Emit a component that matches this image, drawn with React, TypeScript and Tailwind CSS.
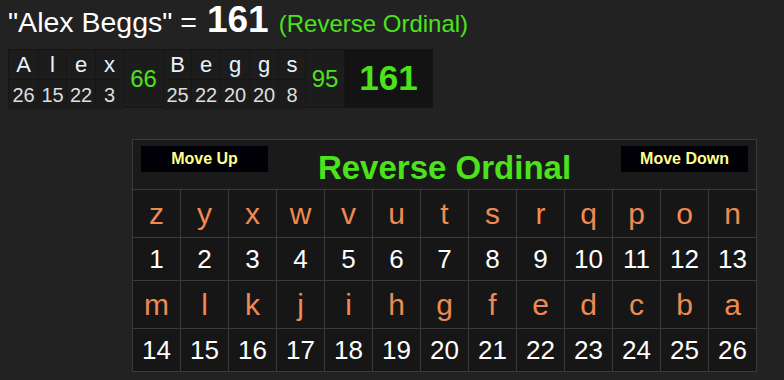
const GREEN = "text-[#4ce21c]";

const breakdown = [
  { ch: "A", n: 26, w: "w-[29px]" },
  { ch: "l", n: 15, w: "w-[27px]" },
  { ch: "e", n: 22, w: "w-[28px]" },
  { ch: "x", n: 3, w: "w-[27px]" },
  { sum: 66, w: "w-[39px]" },
  { ch: "B", n: 25, w: "w-[27px]" },
  { ch: "e", n: 22, w: "w-[28px]" },
  { ch: "g", n: 20, w: "w-[28px]" },
  { ch: "g", n: 20, w: "w-[28px]" },
  { ch: "s", n: 8, w: "w-[26px]" },
  { sum: 95, w: "w-[38px]" },
];

const rows = [
  { letters: "zyxwvutsrqpon".split(""), start: 1 },
  { letters: "mlkjihgfedcba".split(""), start: 14 },
];

const Breakdown = () => (
  <div className="ml-2 flex h-[59px] w-[425px] gap-px bg-[#161616] p-px">
    {breakdown.map((cell, i) =>
      cell.sum !== undefined ? (
        <div
          key={i}
          className={`${cell.w} flex items-center justify-center bg-[#1c1c1c] pt-px text-[24px] ${GREEN}`}
        >
          {cell.sum}
        </div>
      ) : (
        <div key={i} className={`${cell.w} flex flex-col gap-px`}>
          <div className="flex h-[29px] items-center justify-center bg-[#1c1c1c] text-[22px] text-[#e8f3ff]">
            {cell.ch}
          </div>
          <div className="flex flex-1 items-center justify-center bg-[#1c1c1c] text-[20px] text-[#dedede]">
            {cell.n}
          </div>
        </div>
      )
    )}
    <div className={`flex flex-1 items-center justify-center bg-[#131313] text-[35px] font-bold ${GREEN}`}>
      161
    </div>
  </div>
);

const MoveButton = ({ label }: { label: string }) => (
  <button className="flex h-[26px] w-[127px] items-center justify-center bg-[#000006] text-[16px] font-bold text-[#ffff8c]">
    {label}
  </button>
);

const CipherTable = () => (
  <div className="ml-[132px] mt-[31px] flex w-[625px] flex-col gap-px border border-[#3b3b3b] bg-[#3b3b3b]">
    <div className="flex h-[49px] items-start justify-between bg-[#1a1a1a] px-2 pt-[6px]">
      <MoveButton label="Move Up" />
      <span className={`self-center text-[33px] font-bold ${GREEN}`}>Reverse Ordinal</span>
      <MoveButton label="Move Down" />
    </div>
    {rows.map((row) => (
      <div key={row.start} className="flex flex-col gap-px">
        <div className="grid h-[47px] grid-cols-13 gap-px">
          {row.letters.map((l) => (
            <div key={l} className="flex items-center justify-center bg-[#161616] text-[30px] text-[#ee8a52]">
              {l}
            </div>
          ))}
        </div>
        <div className="grid h-[42px] grid-cols-13 gap-px">
          {row.letters.map((l, i) => (
            <div key={l} className="flex items-center justify-center bg-[#161616] text-[26px] text-white">
              {row.start + i}
            </div>
          ))}
        </div>
      </div>
    ))}
  </div>
);

export default function App() {
  return (
    <div className="h-[380px] w-[784px] overflow-hidden bg-[#222222] font-['Liberation_Sans',Arial,sans-serif]">
      <div className="flex h-[49px] items-baseline pl-2 pt-[1px] leading-none">
        <span className="text-[28.5px] text-white">"Alex Beggs" =</span>
        <span className="ml-[10px] text-[37px] font-bold text-white">161</span>
        <span className={`ml-[10px] text-[24px] ${GREEN}`}>(Reverse Ordinal)</span>
      </div>
      <Breakdown />
      <CipherTable />
    </div>
  );
}
